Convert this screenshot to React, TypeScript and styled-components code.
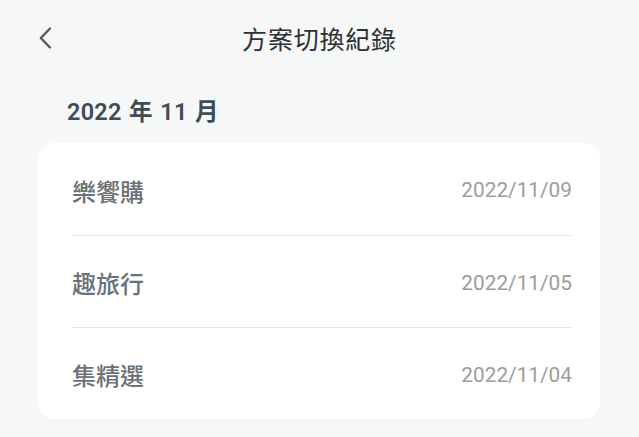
import styled, {createGlobalStyle} from 'styled-components';

const GlobalStyle = createGlobalStyle`
  html, body {
    margin: 0;
    padding: 0;
    background: #f6f7f7;
  }

  body {
    font-family: Roboto, "Noto Sans CJK TC", sans-serif;
    -webkit-font-smoothing: antialiased;
  }
`;

const Page = styled.div`
  width: 639px;
  min-height: 437px;
  background: #f6f7f7;
  display: flex;
  flex-direction: column;
`;

const Header = styled.header`
  position: relative;
  height: 76px;
  display: flex;
  align-items: center;
  justify-content: center;
`;

const BackButton = styled.button`
  position: absolute;
  left: 34px;
  top: 24px;
  width: 24px;
  height: 28px;
  padding: 0;
  border: none;
  background: none;
  display: flex;
  align-items: center;
  justify-content: center;
  cursor: pointer;
`;

const Title = styled.h1`
  margin: 0;
  font-size: 25px;
  font-weight: 400;
  color: #2b3135;
  letter-spacing: 0.8px;
`;

const MonthHeading = styled.h2`
  margin: 21px 0 16px;
  padding-left: 67px;
  line-height: 30px;
  font-size: 23.5px;
  font-weight: 600;
  color: #414b54;
  word-spacing: 1.5px;
  letter-spacing: 0.2px;
`;

const Card = styled.ul`
  list-style: none;
  margin: 0 39px 0 38px;
  padding: 0 28px 0 34px;
  background: #ffffff;
  border-radius: 16px;
`;

const Row = styled.li`
  height: 92px;
  box-sizing: border-box;
  display: flex;
  align-items: center;
  justify-content: space-between;
  padding-top: 2px;

  & + & {
    border-top: 1px solid #e7e9eb;
  }
`;

const PlanName = styled.span`
  font-size: 24px;
  font-weight: 500;
  color: #6a7177;
`;

const SwitchDate = styled.span`
  font-size: 20.8px;
  color: #9c9c9c;
`;

const records = [
  {name: '樂饗購', date: '2022/11/09'},
  {name: '趣旅行', date: '2022/11/05'},
  {name: '集精選', date: '2022/11/04'},
];

export default function App() {
  return (
    <Page>
      <GlobalStyle />
      <Header>
        <BackButton aria-label="返回">
          <svg width="14" height="24" viewBox="0 0 14 24">
            <polyline
              points="11,2.5 1.8,12 11,21.5"
              fill="none"
              stroke="#555a5e"
              strokeWidth="2.4"
              strokeLinecap="round"
              strokeLinejoin="round"
            />
          </svg>
        </BackButton>
        <Title>方案切換紀錄</Title>
      </Header>
      <MonthHeading>2022 年 11 月</MonthHeading>
      <Card>
        {records.map((record) => (
          <Row key={record.date}>
            <PlanName>{record.name}</PlanName>
            <SwitchDate>{record.date}</SwitchDate>
          </Row>
        ))}
      </Card>
    </Page>
  );
}
